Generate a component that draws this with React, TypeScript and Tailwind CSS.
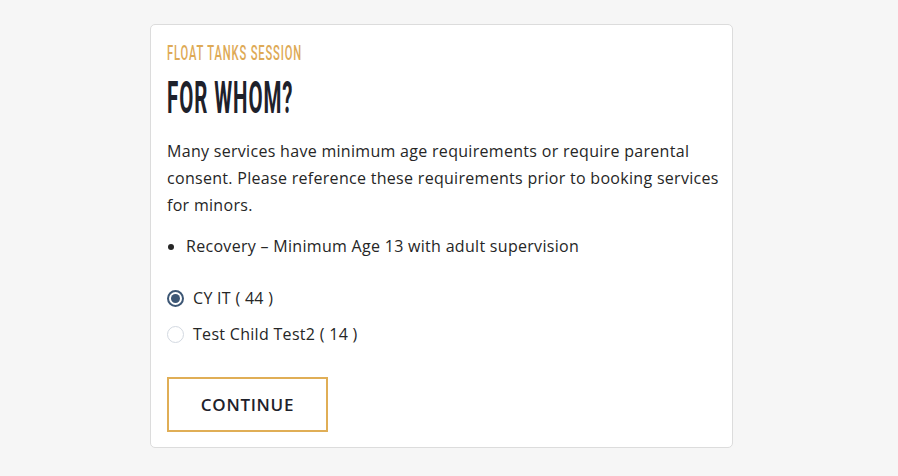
import React, { useState } from "react";

const people = [
  { id: "cy", label: "CY IT ( 44 )" },
  { id: "child", label: "Test Child Test2 ( 14 )" },
];

const display = { fontFamily: "Roboto, sans-serif" };

function Radio({ checked }: { checked: boolean }) {
  return (
    <span
      className={
        checked
          ? "flex h-[17px] w-[17px] shrink-0 items-center justify-center rounded-full border-2 border-[#3d5775] bg-white"
          : "flex h-[17px] w-[17px] shrink-0 items-center justify-center rounded-full border border-[#d3d9e1] bg-white"
      }
    >
      {checked && <span className="h-[9px] w-[9px] rounded-full bg-[#3d5775]" />}
    </span>
  );
}

export default function App() {
  const [selected, setSelected] = useState("cy");
  return (
    <div className="min-h-[476px] w-full bg-[#f6f6f6] pl-[150px] pt-[24px]">
      <div
        className="h-[424px] w-[583px] rounded-[5px] border border-[#dcdcdc] bg-white pl-[16px] pr-[12px] pt-[17px] text-[#262626]"
        style={{ fontFamily: '"Open Sans", sans-serif' }}
      >
        <div className="h-[22px] text-[20px] leading-[22px] text-[#deaa56]" style={display}>
          <span className="inline-block origin-left scale-x-[0.56] whitespace-nowrap font-medium tracking-[1.5px]">
            FLOAT TANKS SESSION
          </span>
        </div>
        <h1 className="mt-[12px] h-[44px] text-[44px] leading-[44px] text-[#1e212b]" style={display}>
          <span className="inline-block origin-left scale-x-[0.465] whitespace-nowrap font-bold tracking-[2px]">
            FOR WHOM?
          </span>
        </h1>
        <p className="mt-[18px] text-[16px] leading-[27px] tracking-[0.3px]">
          Many services have minimum age requirements or require parental consent. Please
          reference these requirements prior to booking services for minors.
        </p>
        <ul className="mt-[14px] list-disc pl-[19px] text-[16px] leading-[27px] tracking-[0.3px]">
          <li>Recovery – Minimum Age 13 with adult supervision</li>
        </ul>
        <div className="mt-[25px] flex flex-col gap-[9px]">
          {people.map((p) => (
            <button
              key={p.id}
              onClick={() => setSelected(p.id)}
              className="flex h-[27px] items-center gap-[9px] text-left text-[16px] leading-[27px] tracking-[0.3px] text-[#262626]"
            >
              <Radio checked={selected === p.id} />
              <span>{p.label}</span>
            </button>
          ))}
        </div>
        <button className="mt-[29px] flex h-[55px] w-[161px] items-center justify-center border-2 border-[#e0ae56] bg-white text-[17px] font-semibold tracking-[0.7px] text-[#1e212b]">
          CONTINUE
        </button>
      </div>
    </div>
  );
}
